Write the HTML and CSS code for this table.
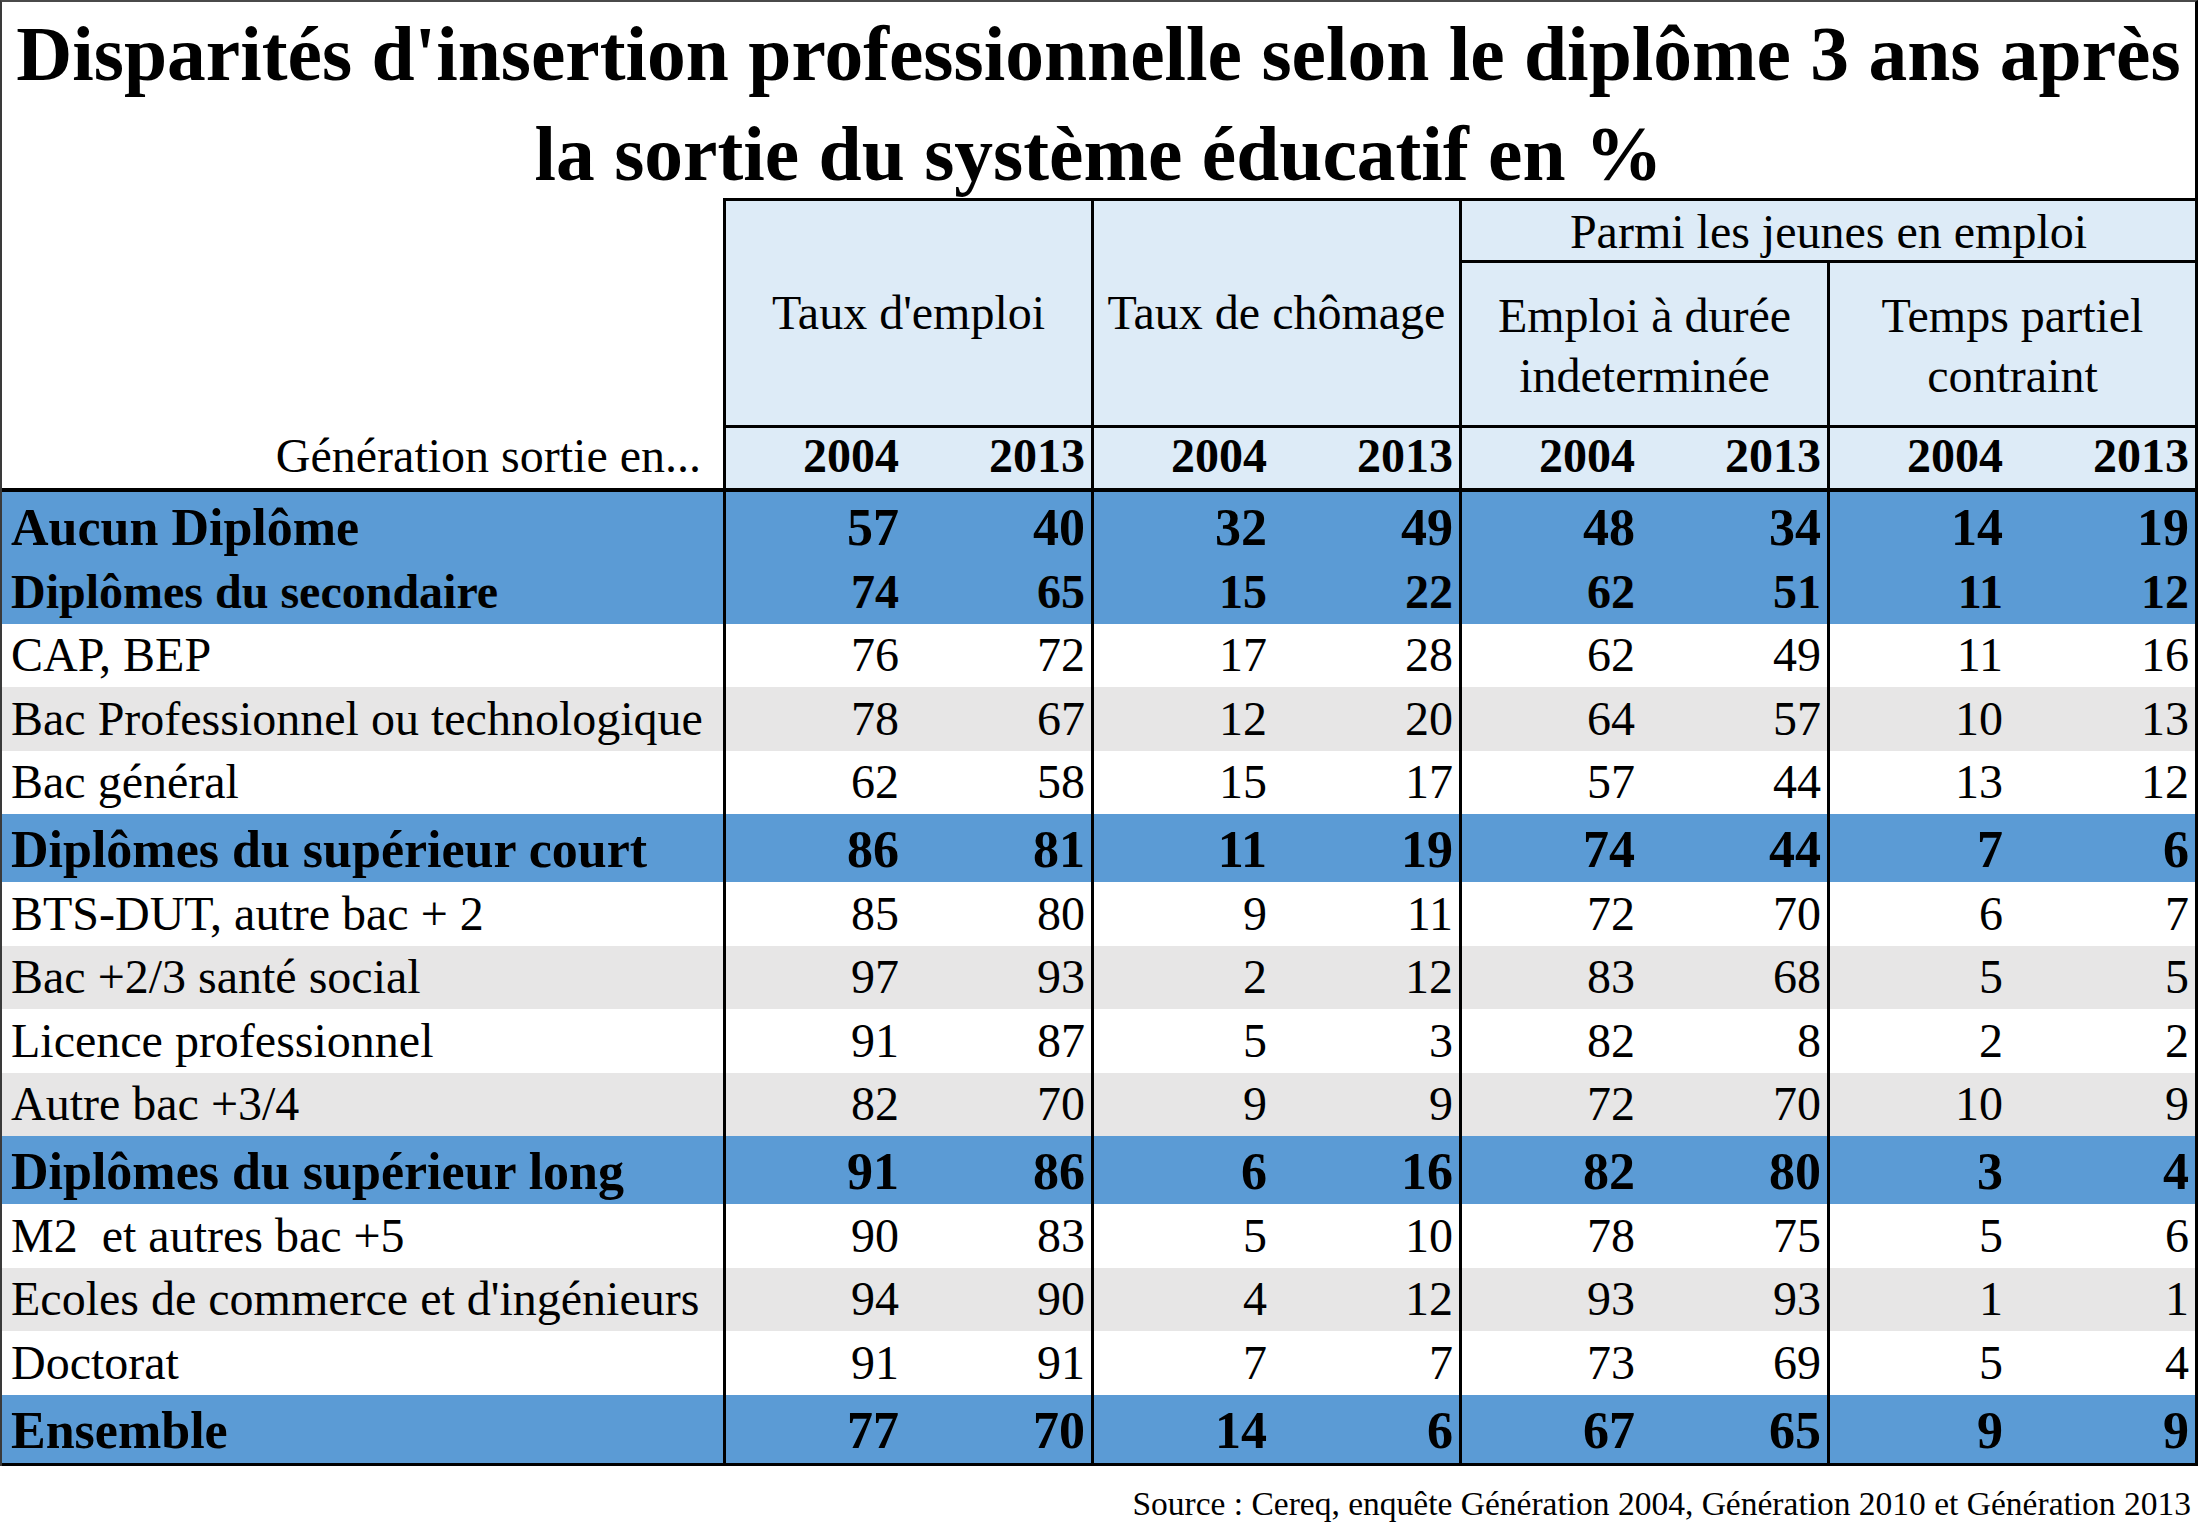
FILE: index.html
```html
<!DOCTYPE html>
<html lang="fr">
<head>
<meta charset="utf-8">
<title>Disparités d'insertion professionnelle selon le diplôme</title>
<link rel="stylesheet" href="styles.css">
</head>
<body>
<div class="sheet">
  <h1 class="title">Disparités d'insertion professionnelle selon le diplôme 3 ans après<br>la sortie du système éducatif en %</h1>
  <div class="head">
    <div class="blank"></div>
    <div class="hcell g1">Taux d'emploi</div>
    <div class="hcell g2">Taux de chômage</div>
    <div class="hcell parmi">Parmi les jeunes en emploi</div>
    <div class="hcell g3">Emploi à durée<br>indeterminée</div>
    <div class="hcell g4">Temps partiel<br>contraint</div>
    <div class="gen">Génération sortie en...</div>
    <div class="yr a">2004</div><div class="yr b">2013</div>
    <div class="yr a">2004</div><div class="yr b">2013</div>
    <div class="yr a">2004</div><div class="yr b">2013</div>
    <div class="yr a">2004</div><div class="yr b">2013</div>
  </div>
  <div class="body">
    <div class="row blue bold tall"><div class="lab">Aucun Diplôme</div><div class="n a">57</div><div class="n b">40</div><div class="n a">32</div><div class="n b">49</div><div class="n a">48</div><div class="n b">34</div><div class="n a">14</div><div class="n b">19</div></div>
    <div class="row blue bold small"><div class="lab">Diplômes du secondaire</div><div class="n a">74</div><div class="n b">65</div><div class="n a">15</div><div class="n b">22</div><div class="n a">62</div><div class="n b">51</div><div class="n a">11</div><div class="n b">12</div></div>
    <div class="row"><div class="lab">CAP, BEP</div><div class="n a">76</div><div class="n b">72</div><div class="n a">17</div><div class="n b">28</div><div class="n a">62</div><div class="n b">49</div><div class="n a">11</div><div class="n b">16</div></div>
    <div class="row grey"><div class="lab">Bac Professionnel ou technologique</div><div class="n a">78</div><div class="n b">67</div><div class="n a">12</div><div class="n b">20</div><div class="n a">64</div><div class="n b">57</div><div class="n a">10</div><div class="n b">13</div></div>
    <div class="row"><div class="lab">Bac général</div><div class="n a">62</div><div class="n b">58</div><div class="n a">15</div><div class="n b">17</div><div class="n a">57</div><div class="n b">44</div><div class="n a">13</div><div class="n b">12</div></div>
    <div class="row blue bold tall"><div class="lab">Diplômes du supérieur court</div><div class="n a">86</div><div class="n b">81</div><div class="n a">11</div><div class="n b">19</div><div class="n a">74</div><div class="n b">44</div><div class="n a">7</div><div class="n b">6</div></div>
    <div class="row"><div class="lab">BTS-DUT, autre bac + 2</div><div class="n a">85</div><div class="n b">80</div><div class="n a">9</div><div class="n b">11</div><div class="n a">72</div><div class="n b">70</div><div class="n a">6</div><div class="n b">7</div></div>
    <div class="row grey"><div class="lab">Bac +2/3 santé social</div><div class="n a">97</div><div class="n b">93</div><div class="n a">2</div><div class="n b">12</div><div class="n a">83</div><div class="n b">68</div><div class="n a">5</div><div class="n b">5</div></div>
    <div class="row"><div class="lab">Licence professionnel</div><div class="n a">91</div><div class="n b">87</div><div class="n a">5</div><div class="n b">3</div><div class="n a">82</div><div class="n b">8</div><div class="n a">2</div><div class="n b">2</div></div>
    <div class="row grey"><div class="lab">Autre bac +3/4</div><div class="n a">82</div><div class="n b">70</div><div class="n a">9</div><div class="n b">9</div><div class="n a">72</div><div class="n b">70</div><div class="n a">10</div><div class="n b">9</div></div>
    <div class="row blue bold tall"><div class="lab">Diplômes du supérieur long</div><div class="n a">91</div><div class="n b">86</div><div class="n a">6</div><div class="n b">16</div><div class="n a">82</div><div class="n b">80</div><div class="n a">3</div><div class="n b">4</div></div>
    <div class="row"><div class="lab">M2&nbsp; et autres bac +5</div><div class="n a">90</div><div class="n b">83</div><div class="n a">5</div><div class="n b">10</div><div class="n a">78</div><div class="n b">75</div><div class="n a">5</div><div class="n b">6</div></div>
    <div class="row grey"><div class="lab">Ecoles de commerce et d'ingénieurs</div><div class="n a">94</div><div class="n b">90</div><div class="n a">4</div><div class="n b">12</div><div class="n a">93</div><div class="n b">93</div><div class="n a">1</div><div class="n b">1</div></div>
    <div class="row"><div class="lab">Doctorat</div><div class="n a">91</div><div class="n b">91</div><div class="n a">7</div><div class="n b">7</div><div class="n a">73</div><div class="n b">69</div><div class="n a">5</div><div class="n b">4</div></div>
    <div class="row blue bold tall"><div class="lab">Ensemble</div><div class="n a">77</div><div class="n b">70</div><div class="n a">14</div><div class="n b">6</div><div class="n a">67</div><div class="n b">65</div><div class="n a">9</div><div class="n b">9</div></div>
  </div>
</div>
<p class="source">Source : Cereq, enquête Génération 2004, Génération 2010 et Génération 2013</p>
</body>
</html>
```

FILE: styles.css
```css
* {
  box-sizing: border-box;
}

html,
body {
  margin: 0;
  padding: 0;
  background: #ffffff;
}

body {
  width: 2200px;
  font-family: "Liberation Serif", "Times New Roman", serif;
  color: #000000;
}

.sheet {
  width: 2198px;
  border-left: 2px solid #3a3a3a;
  border-right: 3px solid #000000;
  border-top: 2px solid #4a4a4a;
}

.title {
  margin: 0;
  height: 196px;
  padding-top: 2px;
  font-size: 77.5px;
  font-weight: bold;
  line-height: 100px;
  text-align: center;
  white-space: nowrap;
}

.head {
  display: grid;
  grid-template-columns: 721px repeat(8, 184px);
  grid-template-rows: 65px 162px 67px;
  font-size: 48px;
}

.blank {
  grid-column: 1;
  grid-row: 1 / span 2;
}

.hcell {
  display: flex;
  align-items: center;
  justify-content: center;
  text-align: center;
  background: #ddebf7;
  border-left: 3px solid #000000;
  line-height: 60px;
  white-space: nowrap;
}

.g1 {
  grid-column: 2 / span 2;
  grid-row: 1 / span 2;
  border-top: 3px solid #000000;
}

.g2 {
  grid-column: 4 / span 2;
  grid-row: 1 / span 2;
  border-top: 3px solid #000000;
}

.parmi {
  grid-column: 6 / span 4;
  grid-row: 1;
  border-top: 3px solid #000000;
  border-bottom: 3px solid #000000;
  line-height: 56px;
  padding-top: 3px;
}

.g3 {
  grid-column: 6 / span 2;
  grid-row: 2;
  padding-top: 4px;
}

.g4 {
  grid-column: 8 / span 2;
  grid-row: 2;
  padding-top: 4px;
}

.gen,
.yr {
  display: flex;
  align-items: flex-end;
  justify-content: flex-end;
  line-height: 56px;
  padding-bottom: 4px;
  border-bottom: 4px solid #000000;
  white-space: nowrap;
}

.gen {
  grid-column: 1;
  grid-row: 3;
  padding-right: 22px;
}

.yr {
  background: #ddebf7;
  border-top: 3px solid #000000;
  font-weight: bold;
}

.yr.a {
  border-left: 3px solid #000000;
  padding-right: 8px;
}

.yr.b {
  padding-right: 6px;
}

.body {
  border-bottom: 3px solid #000000;
}

.row {
  display: grid;
  grid-template-columns: 721px repeat(8, 184px);
  height: 63.5px;
  font-size: 48px;
  line-height: 56px;
}

.row.bold {
  font-size: 52px;
  font-weight: bold;
}

.row.bold.small {
  font-size: 48px;
}

.row.tall {
  height: 68px;
}

.row > div {
  display: flex;
  align-items: flex-end;
  padding-bottom: 4px;
  white-space: nowrap;
}

.lab {
  padding-left: 9px;
}

.n {
  justify-content: flex-end;
}

.n.a {
  border-left: 3px solid #000000;
  padding-right: 8px;
}

.n.b {
  padding-right: 6px;
}

.blue {
  background: #5b9bd5;
}

.grey {
  background: #e7e6e6;
}

.source {
  margin: 18px 0 0;
  padding-right: 9px;
  text-align: right;
  font-size: 33.5px;
  line-height: 40px;
  white-space: nowrap;
}
```
